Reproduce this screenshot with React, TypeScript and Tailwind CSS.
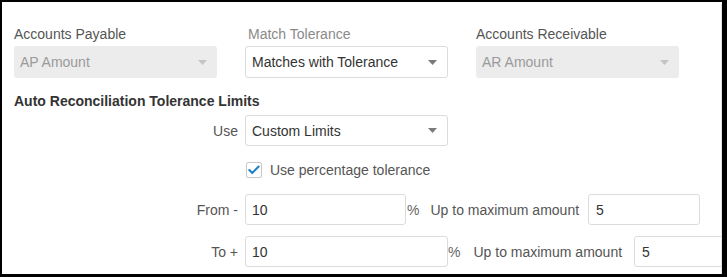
import { Check } from 'lucide-react'

function Arrow({ disabled }: { disabled?: boolean }) {
  return (
    <svg width="9" height="5" viewBox="0 0 9 5" className="shrink-0">
      <path d="M0 0 L9 0 L4.5 5 Z" fill={disabled ? '#c4c4c4' : '#7a7a7a'} />
    </svg>
  )
}

function Select({ value, disabled, h = 'h-[32px]' }: { value: string; disabled?: boolean; h?: string }) {
  return (
    <div
      className={`w-[203px] ${h} flex items-center justify-between pl-[6px] pr-[10px] rounded-[3px] ${
        disabled ? 'bg-[#ececec] text-[#9a9a9a]' : 'bg-white border border-[#dcdcdc] text-[#333]'
      }`}
    >
      <span>{value}</span>
      <Arrow disabled={disabled} />
    </div>
  )
}

export default function App() {
  return (
    <div
      className="w-[727px] h-[277px] bg-white border-black border-t-2 border-l-2 border-r-[5px] border-b-[3px] overflow-hidden text-[14px] leading-5 whitespace-nowrap"
      style={{ fontFamily: '"Liberation Sans", Arial, sans-serif' }}
    >
      <div className="h-full mt-[2px] border-r border-[#e2e2e2] overflow-hidden pl-3 pt-[20px]">
        {/* Top selects */}
        <div className="flex">
          <div className="w-[231px] shrink-0">
            <div className="text-[#555]">Accounts Payable</div>
            <div className="mt-[2px]">
              <Select value="AP Amount" disabled />
            </div>
          </div>
          <div className="w-[231px] shrink-0">
            <div className="text-[#8a8a8a] pl-[3px]">Match Tolerance</div>
            <div className="mt-[2px]">
              <Select value="Matches with Tolerance" />
            </div>
          </div>
          <div className="w-[231px] shrink-0">
            <div className="text-[#555]">Accounts Receivable</div>
            <div className="mt-[2px]">
              <Select value="AR Amount" disabled />
            </div>
          </div>
        </div>

        <h2 className="mt-[13px] font-bold text-[#333]">Auto Reconciliation Tolerance Limits</h2>

        {/* Use */}
        <div className="flex items-center mt-[4px]">
          <div className="w-[224px] shrink-0 text-right text-[#555]">Use</div>
          <div className="ml-[7px] shrink-0">
            <Select value="Custom Limits" h="h-[31px]" />
          </div>
        </div>

        {/* Checkbox */}
        <div className="flex items-center mt-[14px] pl-[232px] h-5">
          <div className="w-[16px] h-[16px] border border-[#c8c8c8] rounded-[2px] flex items-center justify-center bg-white">
            <Check size={14} strokeWidth={3.5} className="text-[#1d7fc4]" />
          </div>
          <span className="ml-[8px] text-[#555]">Use percentage tolerance</span>
        </div>

        {/* From */}
        <div className="flex items-center mt-[14px]">
          <div className="w-[224px] shrink-0 text-right text-[#555]">From -</div>
          <div className="ml-[7px] shrink-0 w-[161px] h-[31px] border border-[#dcdcdc] rounded-[3px] flex items-center pl-[6px] text-[#333]">
            10
          </div>
          <span className="ml-[1px] shrink-0 text-[#666]">%</span>
          <span className="ml-[11px] shrink-0 text-[#555]">Up to maximum amount</span>
          <div className="ml-[9px] shrink-0 w-[112px] h-[31px] border border-[#dcdcdc] rounded-[3px] flex items-center pl-[7px] text-[#333]">
            5
          </div>
        </div>

        {/* To */}
        <div className="flex items-center mt-[11px]">
          <div className="w-[224px] shrink-0 text-right text-[#555]">To +</div>
          <div className="ml-[7px] shrink-0 w-[203px] h-[31px] border border-[#dcdcdc] rounded-[3px] flex items-center pl-[6px] text-[#333]">
            10
          </div>
          <span className="ml-[0px] shrink-0 text-[#666]">%</span>
          <span className="ml-[13px] shrink-0 text-[#555]">Up to maximum amount</span>
          <div className="ml-[12px] shrink-0 w-[112px] h-[31px] border border-[#dcdcdc] rounded-[3px] flex items-center pl-[7px] text-[#333]">
            5
          </div>
        </div>
      </div>
    </div>
  )
}
